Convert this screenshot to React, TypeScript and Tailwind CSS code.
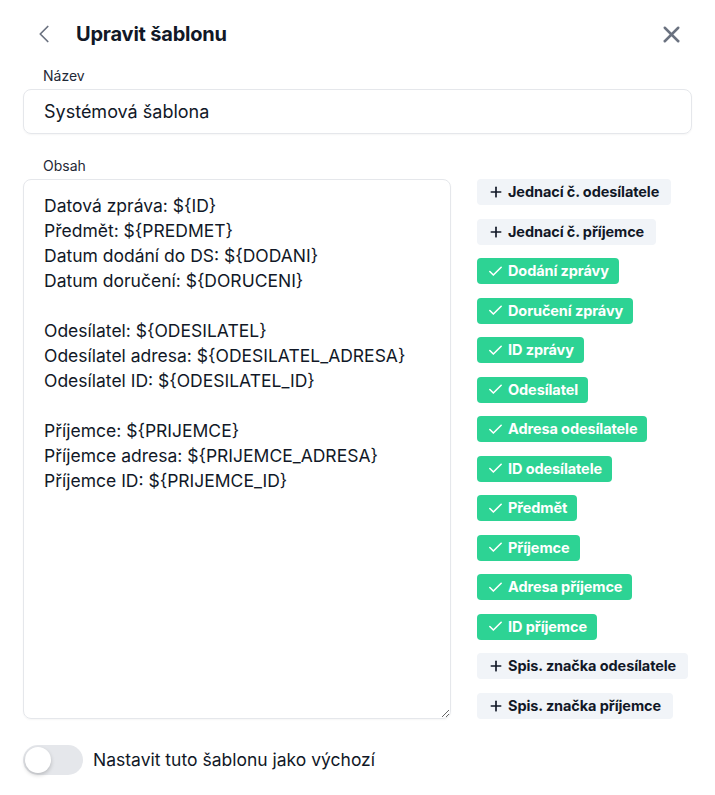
import React, { useState } from 'react';
import { ChevronLeft, X, Plus, Check } from 'lucide-react';

const tags = [
  { label: 'Jednací č. odesílatele', active: false },
  { label: 'Jednací č. příjemce', active: false },
  { label: 'Dodání zprávy', active: true },
  { label: 'Doručení zprávy', active: true },
  { label: 'ID zprávy', active: true },
  { label: 'Odesílatel', active: true },
  { label: 'Adresa odesílatele', active: true },
  { label: 'ID odesílatele', active: true },
  { label: 'Předmět', active: true },
  { label: 'Příjemce', active: true },
  { label: 'Adresa příjemce', active: true },
  { label: 'ID příjemce', active: true },
  { label: 'Spis. značka odesílatele', active: false },
  { label: 'Spis. značka příjemce', active: false },
];

const initialBody = `Datová zpráva: \${ID}
Předmět: \${PREDMET}
Datum dodání do DS: \${DODANI}
Datum doručení: \${DORUCENI}

Odesílatel: \${ODESILATEL}
Odesílatel adresa: \${ODESILATEL_ADRESA}
Odesílatel ID: \${ODESILATEL_ID}

Příjemce: \${PRIJEMCE}
Příjemce adresa: \${PRIJEMCE_ADRESA}
Příjemce ID: \${PRIJEMCE_ID}`;

export default function App() {
  const [name, setName] = useState('Systémová šablona');
  const [body, setBody] = useState(initialBody);
  const [isDefault, setIsDefault] = useState(false);

  return (
    <div className="min-h-screen bg-white font-['Inter',sans-serif] text-[#111827] px-[23px]">
      {/* Header */}
      <div className="flex items-center justify-between h-[34px] mt-[17px]">
        <div className="flex items-center">
          <button className="w-[30px] h-[30px] flex items-center justify-center ml-[6px] text-[#6b7280]">
            <ChevronLeft size={30} strokeWidth={1.4} />
          </button>
          <h1 className="ml-[17px] text-[20px] font-bold tracking-[-0.2px]">Upravit šablonu</h1>
        </div>
        <button className="w-[30px] h-[30px] flex items-center justify-center mr-[6px] text-[#6b7280]">
          <X size={27} strokeWidth={2.2} />
        </button>
      </div>

      {/* Name */}
      <label className="block mt-[16px] ml-[20px] text-[14px] leading-[18px] text-[#1f2937]">Název</label>
      <input
        value={name}
        onChange={(e) => setName(e.target.value)}
        className="mt-[4px] w-[669px] h-[45px] rounded-lg border border-[#e5e7eb] px-[20px] text-[18px] text-[#111827] outline-none shadow-[0_1px_2px_rgba(0,0,0,0.04)]"
      />

      {/* Body */}
      <label className="block mt-[23px] ml-[20px] text-[14px] leading-[18px] text-[#1f2937]">Obsah</label>
      <div className="flex mt-[4px] gap-[26px]">
        <textarea
          value={body}
          onChange={(e) => setBody(e.target.value)}
          className="w-[428px] h-[540px] rounded-lg border border-[#e5e7eb] px-[20px] pt-[13px] text-[17.5px] leading-[25px] text-[#111827] outline-none resize-y shadow-[0_1px_2px_rgba(0,0,0,0.04)]"
        />
        <div className="flex flex-col items-start gap-[13.5px]">
          {tags.map((tag) => (
            <button
              key={tag.label}
              className={
                tag.active
                  ? 'flex items-center h-[26px] pl-[10px] pr-[10px] rounded-[4px] bg-[#2dd394] text-white text-[14.5px] font-bold tracking-[-0.1px]'
                  : 'flex items-center h-[26px] pl-[11px] pr-[12px] rounded-[4px] bg-[#f1f4f8] text-[#111827] text-[14.5px] font-bold tracking-[-0.1px]'
              }
            >
              {tag.active ? (
                <Check size={17} strokeWidth={2.25} className="mr-[4px]" />
              ) : (
                <Plus size={16} strokeWidth={2.5} className="mr-[4px]" />
              )}
              {tag.label}
            </button>
          ))}
        </div>
      </div>

      {/* Default toggle */}
      <div className="flex items-center mt-[26px]">
        <button
          onClick={() => setIsDefault(!isDefault)}
          className={`relative w-[60px] h-[30px] rounded-full ${isDefault ? 'bg-[#2dd394]' : 'bg-[#e5e7eb]'}`}
        >
          <span
            className={`absolute top-[2px] w-[26px] h-[26px] rounded-full bg-white shadow-[0_2px_4px_rgba(0,0,0,0.2)] ${isDefault ? 'left-[32px]' : 'left-[2px]'}`}
          />
        </button>
        <span className="ml-[10px] text-[17.5px] text-[#111827]">Nastavit tuto šablonu jako výchozí</span>
      </div>
    </div>
  );
}
